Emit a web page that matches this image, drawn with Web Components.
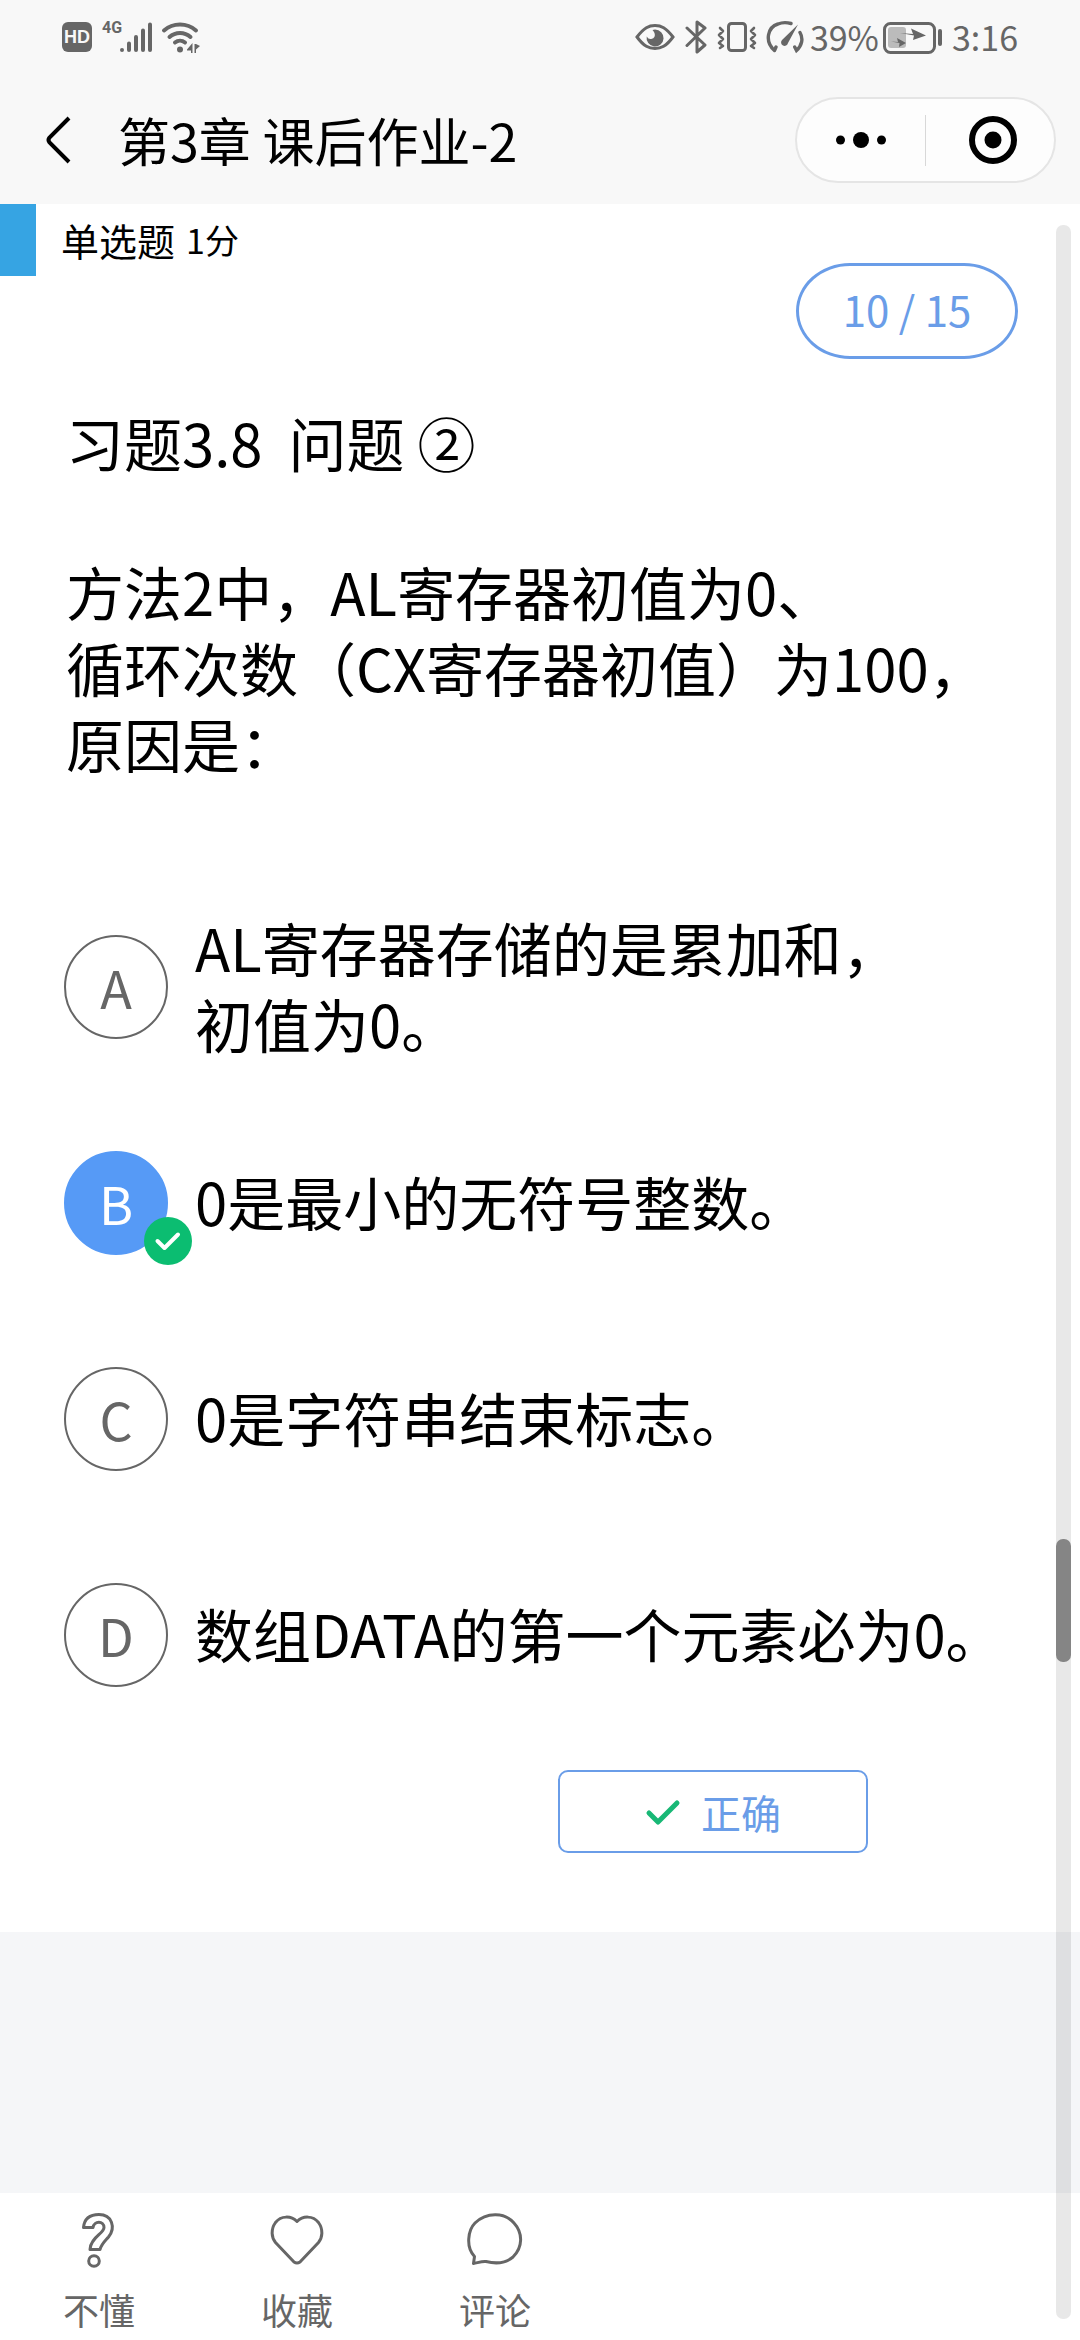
<!DOCTYPE html>
<html lang="zh-CN">
<head>
<meta charset="utf-8">
<meta name="viewport" content="width=device-width, initial-scale=1">
<title>第3章 课后作业-2</title>
<style>
  html, body { margin: 0; padding: 0; }
  body { font-family: "Noto Sans CJK SC", sans-serif; color: #000; background: #fff; }
</style>
</head>
<body>
<quiz-app>
  <status-bar slot="header"></status-bar>
  <nav-bar slot="header">第3章 课后作业-2</nav-bar>
  <question-head>
    <span slot="type">单选题</span>
    <span slot="score">1分</span>
    <span slot="page">10 / 15</span>
  </question-head>
  <question-text>
    <p>习题3.8&nbsp; 问题 ②</p>
    <p>方法2中，AL寄存器初值为0、<br>循环次数（CX寄存器初值）为100，<br>原因是：</p>
  </question-text>
  <option-list>
    <quiz-option letter="A">AL寄存器存储的是累加和，<br>初值为0。</quiz-option>
    <quiz-option letter="B" checked>0是最小的无符号整数。</quiz-option>
    <quiz-option letter="C">0是字符串结束标志。</quiz-option>
    <quiz-option letter="D">数组DATA的第一个元素必为0。</quiz-option>
  </option-list>
  <answer-result>正确</answer-result>
  <action-bar slot="footer">
    <action-item icon="question">不懂</action-item>
    <action-item icon="heart">收藏</action-item>
    <action-item icon="comment">评论</action-item>
  </action-bar>
</quiz-app>

<script>
const define = (name, render, ready) => customElements.define(name, class extends HTMLElement {
  connectedCallback() {
    if (this.shadowRoot) return;
    const root = this.attachShadow({ mode: "open" });
    root.innerHTML = render(this);
    if (ready) ready(this, root);
  }
});

define("quiz-app", () => `
  <style>
    :host { display: flex; flex-direction: column; min-height: 100vh; background: #f5f6f8; }
    header { background: #f8f8f8; }
    main { background: #fff; }
    .space { flex: 1; }
    footer { background: #fff; }
    .scroll { position: fixed; top: 225px; bottom: 21px; right: 9px; width: 15px; border-radius: 7px;
      background: rgba(0,0,0,.09); display: flex; flex-direction: column; }
    .scroll::before { content: ""; flex: 1314 1 0; }
    .scroll::after { content: ""; flex: 657 1 0; }
    .thumb { height: 123px; border-radius: 7px; background: #858585; }
  </style>
  <header><slot name="header"></slot></header>
  <main><slot></slot></main>
  <div class="space"></div>
  <footer><slot name="footer"></slot></footer>
  <div class="scroll" aria-hidden="true"><div class="thumb"></div></div>`);

define("status-bar", () => `
  <style>
    :host { display: flex; justify-content: space-between; align-items: flex-start; height: 56px; padding: 20px 62px 0; box-sizing: content-box;
      color: #666; font-size: 34px; line-height: 34px; }
    div { display: flex; align-items: center; height: 34px; }
    .hd { font: bold 18px/30px "Liberation Sans", sans-serif; color: #f8f8f8; background: #666; border-radius: 6px; width: 30px; height: 30px; text-align: center; }
    .net { font: bold 16px/16px Roboto, sans-serif; align-self: flex-start; margin-left: 10px; }
    svg { display: block; flex: none; }
  </style>
  <div>
    <span class="hd">HD</span><span class="net">4G</span>
    <svg width="34" height="34" viewBox="0 0 34 34" stroke="#666" stroke-width="4" stroke-linecap="round" style="margin-left:-2px" aria-hidden="true">
      <path d="M2 30v0M9 23.500v6.500M16 17v13M23 10.500v19.500M30 4.500v25.500"/>
    </svg>
    <svg width="42" height="34" viewBox="0 0 42 34" fill="none" stroke="#666" stroke-width="4" stroke-linecap="round" style="margin-left:6px" aria-hidden="true">
      <path d="M4 10.500C13 2.500 27 2.500 36 10.500M9.500 17C15.500 11.500 24.500 11.500 30.500 17M15 22.500C18 20 22 20 25 22.500"/>
      <circle cx="20" cy="29.500" r="3" fill="#666" stroke="none"/>
      <path d="M27 29.500l5.500-6.500v10h-1.500v-2.500h-4zM34.500 24v9h1.500v-3.500l4-3.500-4-2z" fill="#666" stroke="none"/>
    </svg>
  </div>
  <div>
    <svg width="40" height="34" viewBox="0 0 40 34" aria-hidden="true">
      <path d="M2 17C9 7.500 14 5.500 20 5.500S31 7.500 38 17C31 26.500 26 28.500 20 28.500S9 26.500 2 17z" fill="none" stroke="#666" stroke-width="3"/>
      <path d="M20 9.500a8.500 8.500 0 1 1-8.300 7q2 3.500 5.300 2.300c4-1.500 3.500-6 .5-8.900q1-.4 2.500-.4z" fill="#666"/>
    </svg>
    <svg width="22" height="34" viewBox="0 0 22 34" fill="none" stroke="#666" stroke-width="3" stroke-linejoin="round" stroke-linecap="round" style="margin-left:10px" aria-hidden="true">
      <path d="M2 8L20 25l-8 7V2l8 6L2 25.500"/>
    </svg>
    <svg width="40" height="34" viewBox="0 0 40 34" fill="none" stroke="#666" stroke-width="3" stroke-linejoin="round" stroke-linecap="round" style="margin-left:10px" aria-hidden="true">
      <rect x="11.500" y="3.500" width="17" height="27" rx="3"/>
      <path d="M3 8l3 3-4 4 4 4-4 4 4 3-3 2M37 8l-3 3 4 4-4 4 4 4-4 3 3 2" stroke-width="2.600"/>
    </svg>
    <svg width="38" height="34" viewBox="0 0 38 34" fill="none" stroke="#666" stroke-width="3" stroke-linecap="round" style="margin-left:9px" aria-hidden="true">
      <path d="M8.500 30.500l1.500-3.500M8.500 30.500C-2 21 2 7 12 4q6-2.500 13-.5M34 12.500c3.500 6 2 13-3.500 18l-1.800-3.500" stroke-width="3.400"/>
      <path d="M32 4.500l-10 18.500a3.500 3.500 0 1 1-6-3z" fill="#666" stroke="none"/>
    </svg>
    <span style="margin-left:6px">39%</span>
    <svg width="60" height="34" viewBox="0 0 60 34" style="margin-left:3px" aria-hidden="true">
      <rect x="2.500" y="3.500" width="50" height="29" rx="6" fill="none" stroke="#666" stroke-width="3"/>
      <rect x="6" y="7" width="18" height="21" rx="3" fill="#bbb"/>
      <path d="M18 13l13 1-2-5.500 15 7-13 4.500 1-4.500zM9 21.500l7 .5-1-4 9 5-7 4 .5-4z" fill="#666"/>
      <path d="M58 11v13" stroke="#666" stroke-width="4" stroke-linecap="round"/>
    </svg>
    <span style="margin-left:10px">3:16</span>
  </div>`);

define("nav-bar", () => `
  <style>
    :host { display: flex; align-items: center; height: 128px; padding: 0 24px 0 34px; }
    button { border: 0; background: none; padding: 0; margin: 0; display: flex; align-items: center; justify-content: center; }
    .back { width: 48px; height: 72px; }
    h1 { flex: 1; margin: 0 0 0 36px; font-size: 52px; line-height: 76px; font-weight: 400; }
    .capsule { display: flex; align-items: center; width: 257px; height: 82px; border: 2px solid #e5e5e5; border-radius: 43px; background: #fdfdfd; }
    .capsule button { width: 128px; height: 100%; box-sizing: border-box; }
    .capsule .close { padding-left: 6px; }
    i { width: 1px; height: 51px; background: #d8d8d8; }
  </style>
  <button class="back" aria-label="返回">
    <svg width="28" height="48" viewBox="0 0 28 48" fill="none" stroke="#000" stroke-width="4"><path d="M25 2L5.500 21.500q-2 2.500 0 5L25 46"/></svg>
  </button>
  <h1><slot></slot></h1>
  <div class="capsule">
    <button aria-label="更多">
      <svg width="52" height="18" viewBox="0 0 52 18"><circle cx="5.500" cy="9" r="4.500"/><circle cx="26" cy="9" r="8"/><circle cx="46.500" cy="9" r="4.500"/></svg>
    </button>
    <i></i>
    <button class="close" aria-label="关闭">
      <svg width="48" height="48" viewBox="0 0 48 48"><circle cx="24" cy="24" r="21" fill="none" stroke="#000" stroke-width="6"/><circle cx="24" cy="24" r="8.500"/></svg>
    </button>
  </div>`);

define("question-head", () => `
  <style>
    :host { display: flex; align-items: flex-start; justify-content: space-between; }
    .kind { display: flex; align-items: center; height: 72px; gap: 11px; border-left: 36px solid #36a4e3; padding-left: 25px; font-size: 38px; line-height: 72px; }
    .score { font-size: 34px; }
    .page { box-sizing: border-box; width: 222px; height: 96px; margin: 59px 62px 0 0; border: 3px solid #6a9de8; border-radius: 54px / 48px;
      color: #6a9de8; font-size: 42px; line-height: 86px; text-align: center; }
  </style>
  <div class="kind"><slot name="type"></slot><span class="score"><slot name="score"></slot></span></div>
  <div class="page"><slot name="page"></slot></div>`);

define("question-text", () => `
  <style>
    :host { display: flex; flex-direction: column; gap: 73px; padding: 45px 66px 98px; font-size: 58px; line-height: 76px; }
    ::slotted(p) { margin: 0; }
  </style><slot></slot>`);

define("option-list", () => `
  <style>:host { display: flex; flex-direction: column; }</style>
  <div role="radiogroup" aria-label="选项"><slot></slot></div>`, el => {
    el.addEventListener("option-picked", e => {
      for (const o of el.querySelectorAll("quiz-option")) if (o !== e.target) o.shadowRoot.querySelector("input").checked = false;
    });
  });

define("quiz-option", el => `
  <style>
    :host { display: block; }
    label { display: flex; align-items: center; gap: 27px; min-height: 216px; padding: 0 64px; font-size: 58px; line-height: 76px; }
    .mark { display: grid; flex: none; position: relative; width: 104px; height: 104px; }
    .mark > input, .mark > span { grid-area: 1 / 1; }
    input { appearance: none; margin: 0; box-sizing: border-box; width: 104px; height: 104px; border: 2px solid #666; border-radius: 50%; }
    .mark > span { z-index: 1; align-self: center; justify-self: center; color: #666; font-size: 52px; }
    input:checked { background: #569af6; border-color: #569af6; }
    input:checked + span { color: #fff; }
    .badge { display: none; position: absolute; right: -24px; bottom: -10px; z-index: 2; }
    input:checked ~ .badge { display: block; }
    .text { padding-bottom: 4px; }
  </style>
  <label>
    <span class="mark">
      <input type="radio" name="answer"${el.hasAttribute("checked") ? " checked" : ""}>
      <span>${el.getAttribute("letter")}</span>
      <svg class="badge" width="48" height="48" viewBox="0 0 48 48" aria-hidden="true"><circle cx="24" cy="24" r="24" fill="#0bbd71"/><path d="M13.500 24l7 7L34 17.500" fill="none" stroke="#fff" stroke-width="4" stroke-linecap="round" stroke-linejoin="round"/></svg>
    </span>
    <span class="text"><slot></slot></span>
  </label>`, (el, root) => {
    root.querySelector("input").addEventListener("change", () => el.dispatchEvent(new Event("option-picked", { bubbles: true })));
  });

define("answer-result", () => `
  <style>
    :host { display: flex; justify-content: flex-end; padding: 27px 212px 79px 64px; }
    button { display: flex; align-items: center; justify-content: center; gap: 20px; box-sizing: border-box; width: 310px; height: 83px; padding: 0;
      border: 2px solid #6a9de8; border-radius: 10px; background: #fff; color: #6a9de8; font: inherit; font-size: 40px; line-height: 76px; }
  </style>
  <button>
    <svg width="36" height="28" viewBox="0 0 36 28" fill="none" stroke="#18b876" stroke-width="5" stroke-linecap="round" stroke-linejoin="round" aria-hidden="true"><path d="M4 15l9 9L32 5"/></svg>
    <span><slot></slot></span>
  </button>`);

define("action-bar", () => `
  <style>:host { display: flex; height: 147px; overflow: hidden; }</style><slot></slot>`);

const icons = {
  question: `<path d="M12.500 17.500C13.500 7 20 4.500 28 4.500c13 0 17 13 9.500 22.500-3.500 4-7 7-8.500 12.500h-10c.5-12 14-16 14-22 0-7-10-7-11 0z"/><circle cx="23" cy="51" r="5.300"/>`,
  heart: `<path d="M28 11.500C22 5.500 12 5.500 6.500 12.500c-5 7-4 15 0 20L25 52q3 2 6 0l18.500-19.500c4-5 5-13 0-20C44 5.500 34 5.500 28 11.500z"/>`,
  comment: `<path d="M7.500 46.500C-1.500 37 1 20 8 13 20 1.500 38 2.500 47 13c9 10 9 24-1 34-7 6-17 7-27 4.500-4-.5-9 1.500-12.500 2z"/>`
};

define("action-item", el => `
  <style>
    :host { display: block; width: 198px; }
    button { display: flex; flex-direction: column; align-items: center; width: 100%; padding: 17px 0 0; border: 0; background: none; color: #666; font: inherit; font-size: 36px; line-height: 48px; }
    svg { margin-bottom: 17px; }
  </style>
  <button>
    <svg width="56" height="58" viewBox="0 0 56 58" fill="none" stroke="#666" stroke-width="3" stroke-linejoin="round" aria-hidden="true">${icons[el.getAttribute("icon")]}</svg>
    <span><slot></slot></span>
  </button>`);
</script>
</body>
</html>
